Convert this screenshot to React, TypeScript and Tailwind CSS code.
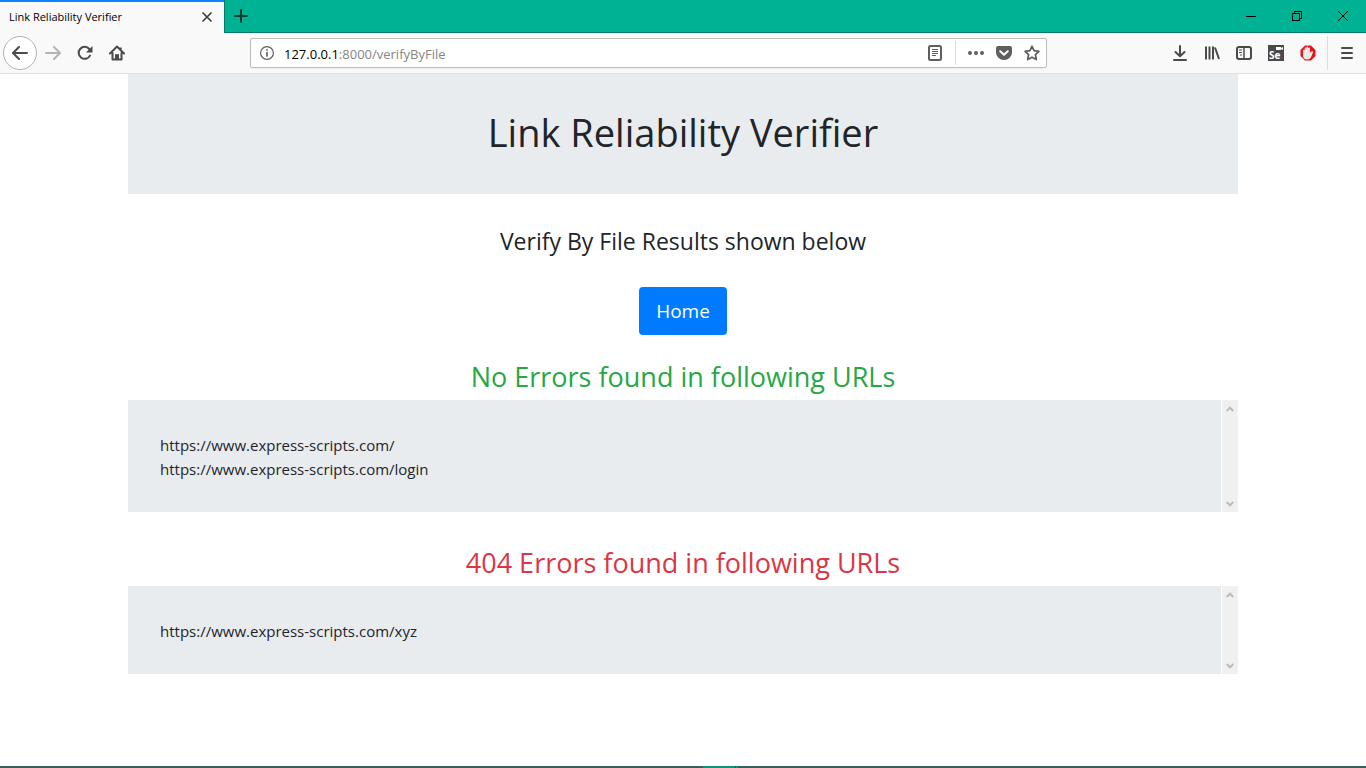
import React from 'react';

type IconProps = { children: React.ReactNode; className?: string };

function Icon({ children, className = '' }: IconProps) {
  return (
    <svg viewBox="0 0 16 16" className={`size-4 shrink-0 ${className}`} fill="none" stroke="currentColor" strokeWidth="2" strokeLinecap="round" strokeLinejoin="round" aria-hidden="true">
      {children}
    </svg>
  );
}

function ToolButton({ label, children, className = 'w-8' }: IconProps & { label: string }) {
  return (
    <button type="button" aria-label={label} className={`flex h-8 shrink-0 items-center justify-center ${className}`}>
      <Icon>{children}</Icon>
    </button>
  );
}

function WindowButton({ label, children }: { label: string; children: React.ReactNode }) {
  return (
    <button type="button" aria-label={label} className="flex h-full w-[46px] items-center justify-center text-black">
      <svg viewBox="0 0 10 10" className="size-2.5" fill="none" stroke="currentColor" shapeRendering="crispEdges" aria-hidden="true">
        {children}
      </svg>
    </button>
  );
}

function TabStrip() {
  return (
    <div className="flex h-[33px] bg-[#00b294]">
      <div className="flex w-56 items-center border-t-2 border-[#0a84ff] bg-[#f9f9fa] pr-[9px] pb-px pl-[9px]">
        <span className="flex-1 text-[11px] text-black">Link Reliability Verifier</span>
        <button type="button" aria-label="Close tab" className="text-[#3f3f40]">
          <Icon>
            <path d="M4 4l8 8M12 4l-8 8" strokeWidth="1.7" />
          </Icon>
        </button>
      </div>
      <div className="flex flex-1 items-center border-b border-l border-[#007d68]">
        <button type="button" aria-label="New tab" className="flex h-full w-8 items-center justify-center text-[#0b3a31]">
          <Icon>
            <path d="M8 2v12M2 8h12" />
          </Icon>
        </button>
        <div className="ml-auto flex h-full">
          <WindowButton label="Minimize">
            <path d="M0 5.5h10" />
          </WindowButton>
          <WindowButton label="Restore">
            <path d="M.5 2.5h7v7h-7zM2.5 2.5v-2h7v7h-2" />
          </WindowButton>
          <WindowButton label="Close">
            <path d="M0 0l10 10M10 0L0 10" shapeRendering="auto" />
          </WindowButton>
        </div>
      </div>
    </div>
  );
}

function UrlBar() {
  return (
    <div className="mx-[117px] flex h-[30px] min-w-0 flex-1 items-center rounded-xs border border-[#bebebf] bg-white pr-1.5 pl-2 text-[#5f5f60] shadow-xs">
      <button type="button" aria-label="Site information">
        <Icon>
          <circle cx="8" cy="8" r="6.4" strokeWidth="1.2" />
          <path d="M8 7.5v3.5M8 4.9v.1" strokeWidth="1.7" />
        </Icon>
      </button>
      <div className="relative ml-[9px] h-5 min-w-0 flex-1 text-[13px] leading-[22px]">
        <input aria-label="Address" defaultValue="127.0.0.1:8000/verifyByFile" className="block w-full bg-transparent text-transparent caret-black outline-none" />
        <span aria-hidden="true" className="pointer-events-none absolute inset-0 text-[#858585]">
          <span className="text-black">127.0.0.1</span>:8000/verifyByFile
        </span>
      </div>
      <button type="button" aria-label="Reader view" className="mr-3">
        <Icon>
          <rect x="2" y="1" width="12" height="14" rx="1.5" />
          <path d="M5 4.5h6M5 6.5h6M5 8.5h6M5 10.5h4" strokeWidth="1" strokeLinecap="butt" />
        </Icon>
      </button>
      <span className="h-6 w-px bg-[#dcdcdc]" />
      <ToolButton label="Page actions" className="ml-1.5 w-7">
        <g fill="currentColor" stroke="none">
          <circle cx="2" cy="8" r="2" />
          <circle cx="8" cy="8" r="2" />
          <circle cx="14" cy="8" r="2" />
        </g>
      </ToolButton>
      <ToolButton label="Save to Pocket" className="w-7">
        <path d="M2 1h12a2 2 0 0 1 2 2v4.5a8 7.5 0 0 1-16 0V3a2 2 0 0 1 2-2z" fill="currentColor" stroke="none" />
        <path d="M4.2 6.2L8 9.8l3.8-3.6" stroke="#fff" />
      </ToolButton>
      <button type="button" aria-label="Bookmark this page" className="ml-1.5">
        <Icon>
          <path d="M8 1.3l2.1 4.4 4.8.6-3.5 3.4.9 4.8L8 12.2l-4.3 2.3.9-4.8L1.1 6.3l4.8-.6z" strokeWidth="1.8" />
        </Icon>
      </button>
    </div>
  );
}

function Toolbar() {
  return (
    <div className="flex h-[41px] items-center border-b border-[#e0e0e1] bg-[#f9f9fa] pr-[3px] pl-[3px] text-[#4a4a4b]">
      <button type="button" aria-label="Back" className="flex size-[34px] shrink-0 items-center justify-center rounded-full border border-[#b1b1b2] bg-white">
        <Icon>
          <path d="M15 8H1.5M7 2L1 8l6 6" />
        </Icon>
      </button>
      <button type="button" aria-label="Forward" disabled className="flex h-8 w-8 shrink-0 items-center justify-center text-[#b4b4b5]">
        <Icon>
          <path d="M1 8h13.5M9 2l6 6-6 6" />
        </Icon>
      </button>
      <ToolButton label="Reload">
        <path d="M13 10.6A6 6 0 1 1 12.3 4" />
        <path d="M15.5 1v6.5H9z" fill="currentColor" stroke="none" />
      </ToolButton>
      <ToolButton label="Home">
        <path d="M1 8.5L8 1.5l7 7M3.5 8v6.5h9V8" />
        <path d="M6 14.5V9.2h4v5.3z" fill="currentColor" stroke="none" />
        <path d="M11.7 2.5v2" strokeLinecap="butt" />
      </ToolButton>
      <UrlBar />
      <ToolButton label="Downloads">
        <path d="M8 1v10M3.5 7L8 11.3 12.5 7M2 15h12" />
      </ToolButton>
      <ToolButton label="Library">
        <path d="M2 1.5v13M5.5 1.5v13M9 1.5v13M11 2.5L15 14" strokeLinecap="butt" />
      </ToolButton>
      <ToolButton label="Sidebars">
        <rect x="1" y="2" width="14" height="12" rx="2" />
        <path d="M8 2v12" strokeWidth="1.5" />
        <path d="M3 5h3M3 7.5h3M4 10h2" strokeWidth="1" strokeLinecap="butt" />
      </ToolButton>
      <button type="button" aria-label="Selenium IDE" className="flex h-8 w-8 shrink-0 items-center justify-center">
        <span className="flex size-4 flex-col items-start bg-[#4a4a4b] pl-px text-[10px] leading-[9px] font-bold text-white">
          <svg viewBox="0 0 15 6" className="h-1.5 w-full shrink-0" aria-hidden="true">
            <path d="M7 2h5v1l2-1v3l-2-1v1H7z" fill="#fff" />
          </svg>
          <span>Se</span>
        </span>
      </button>
      <ToolButton label="Ad blocker">
        <path d="M5 .5h6L15.5 5v6L11 15.5H5L.5 11V5z" fill="#e8141c" stroke="none" />
        <path d="M3 10.5V5.5c0-1 1.5-1 1.700-.1V3.500c0-1.200 1.500-1.200 1.700 0v-1c.1-1.200 1.700-1.200 1.800 0v.8c.2-1 1.700-1 1.700.2v4.600l.9-1.300c.8-1.100 2.700-.7 2.200.6l-1.900 4.600c-.7 1.600-2 2.500-3.900 2.500-2.600 0-4.200-1.400-4.200-4z" fill="#ebebeb" stroke="none" />
      </ToolButton>
      <span className="ml-[3px] h-[34px] w-px bg-[#dcdcdd]" />
      <ToolButton label="Open menu" className="ml-[3px] w-8">
        <path d="M3 3h10M3 8h10M3 13h10" />
      </ToolButton>
    </div>
  );
}

function ScrollArrow({ label, d }: { label: string; d: string }) {
  return (
    <button type="button" aria-label={label} className="flex h-[17px] w-[15px] items-center justify-center">
      <svg viewBox="0 0 8 6" className="h-1.5 w-2" fill="none" stroke="#bcbcbc" strokeWidth="2" aria-hidden="true">
        <path d={d} />
      </svg>
    </button>
  );
}

type ResultProps = { title: string; tone: string; urls: string[] };

function ResultSection({ title, tone, urls }: ResultProps) {
  return (
    <section className="mb-[33px]">
      <h3 className={`mb-[5px] text-center text-[27px] leading-9 ${tone}`}>{title}</h3>
      <div className="flex bg-[#e9ecef]">
        <ul className="flex-1 px-8 pt-[33px] pb-[31px] text-[15px] leading-6">
          {urls.map((url) => (
            <li key={url}>{url}</li>
          ))}
        </ul>
        <div className="flex w-[17px] flex-col justify-between border-l border-white bg-[#f0f0f0]">
          <ScrollArrow label="Scroll up" d="M.7 5L4 1.7 7.3 5" />
          <ScrollArrow label="Scroll down" d="M.7 1L4 4.3 7.3 1" />
        </div>
      </div>
    </section>
  );
}

const sections: ResultProps[] = [
  {
    title: 'No Errors found in following URLs',
    tone: 'text-[#28a745]',
    urls: ['https://www.express-scripts.com/', 'https://www.express-scripts.com/login'],
  },
  {
    title: '404 Errors found in following URLs',
    tone: 'text-[#dc3545]',
    urls: ['https://www.express-scripts.com/xyz'],
  },
];

export default function App() {
  return (
    <div className="flex min-h-screen flex-col bg-white font-['Open_Sans','Noto_Sans',sans-serif] text-[#212529]">
      <header>
        <TabStrip />
        <Toolbar />
      </header>
      <main className="mx-32 flex-1">
        <div className="bg-[#e9ecef] pt-[34px] pb-[38px] text-center">
          <h1 className="text-[38px] leading-[48px]">Link Reliability Verifier</h1>
        </div>
        <p className="mt-[29px] text-center text-[23px] leading-9">Verify By File Results shown below</p>
        <div className="mt-7 mb-6 flex justify-center">
          <a href="#home" className="flex h-12 items-center rounded-sm bg-[#007bff] px-[17px] pt-px text-[19px] text-white">
            Home
          </a>
        </div>
        {sections.map((section) => (
          <ResultSection key={section.title} {...section} />
        ))}
      </main>
      <footer className="flex h-0.5 bg-[#37605a]">
        <span className="ml-[51.5%] w-8 bg-[#15907b]" />
        <span className="w-px bg-[#0f5f52]" />
        <span className="w-0.5 bg-[#15907b]" />
      </footer>
    </div>
  );
}
